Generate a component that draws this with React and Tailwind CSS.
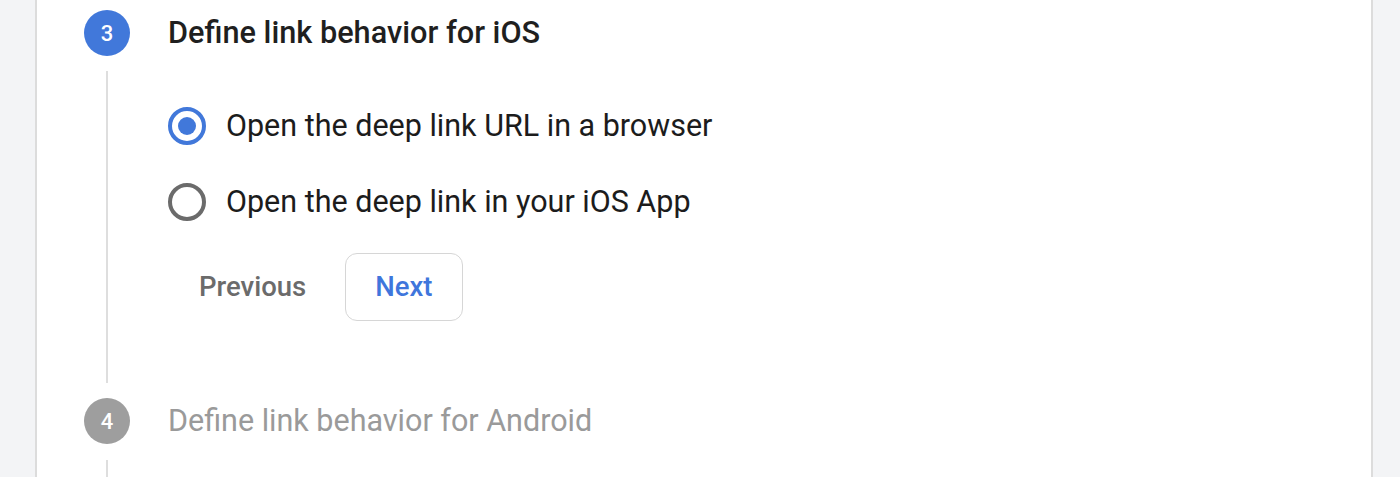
export default function App() {
  const font = { fontFamily: "Roboto, 'Noto Sans', sans-serif" };
  return (
    <div className="h-[477px] w-[1400px] bg-[#f3f4f6] overflow-hidden" style={font}>
      <div className="ml-[35px] w-[1338px] h-full bg-white border-x-2 border-[#dcdcdc] pl-[47px]">
        {/* Step 3 header */}
        <div className="flex items-center pt-[10px]">
          <div className="w-[46px] h-[46px] rounded-full bg-[#4178da] flex items-center justify-center text-white text-[22px] font-medium">3</div>
          <div className="ml-[38px] text-[30.7px] leading-[46px] font-medium text-[#1f1f1f]">Define link behavior for iOS</div>
        </div>
        {/* Step 3 body */}
        <div className="flex">
          <div className="w-[46px] flex justify-center py-[15px]">
            <div className="w-[2px] h-[312px] bg-[#dedede]"></div>
          </div>
          <div className="ml-[38px] pt-[51px]">
            <div className="flex items-center h-[38px]">
              <div className="w-[38px] h-[38px] rounded-full border-[4px] border-[#4178da] flex items-center justify-center">
                <div className="w-[18px] h-[18px] rounded-full bg-[#4178da]"></div>
              </div>
              <span className="ml-[20px] text-[30.5px] leading-[38px] text-[#1c1c1c]">Open the deep link URL in a browser</span>
            </div>
            <div className="flex items-center h-[38px] mt-[38px]">
              <div className="w-[38px] h-[38px] rounded-full border-[4px] border-[#6b6b6b]"></div>
              <span className="ml-[20px] text-[30.5px] leading-[38px] text-[#1c1c1c]">Open the deep link in your iOS App</span>
            </div>
            <div className="flex items-center mt-[32px] gap-[8px]">
              <button className="h-[68px] px-[31px] text-[27.5px] font-medium text-[#6b6b6b] rounded-[12px]">Previous</button>
              <button className="h-[68px] px-[29px] text-[27.5px] font-medium text-[#3f76dc] rounded-[12px] border border-[#d6d6d6]">Next</button>
            </div>
          </div>
        </div>
        {/* Step 4 header */}
        <div className="flex items-center">
          <div className="w-[46px] h-[46px] rounded-full bg-[#9e9e9e] flex items-center justify-center text-white text-[22px] font-medium">4</div>
          <div className="ml-[38px] text-[30.5px] leading-[46px] text-[#9a9a9a]">Define link behavior for Android</div>
        </div>
        <div className="w-[46px] flex justify-center pt-[16px]">
          <div className="w-[2px] h-[40px] bg-[#dedede]"></div>
        </div>
      </div>
    </div>
  );
}
